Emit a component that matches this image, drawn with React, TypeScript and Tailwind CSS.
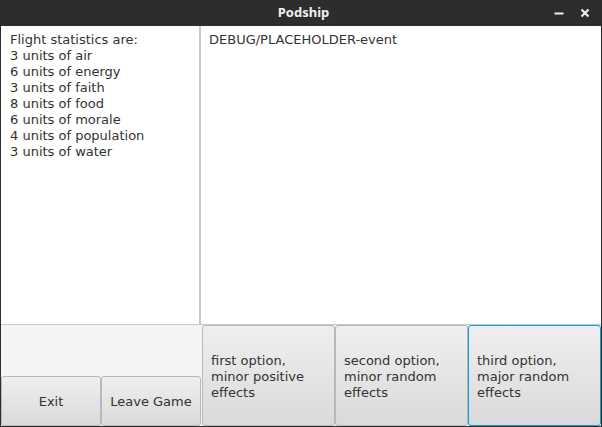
import React from "react"

const stats = [
  "3 units of air",
  "6 units of energy",
  "3 units of faith",
  "8 units of food",
  "6 units of morale",
  "4 units of population",
  "3 units of water",
]

const options = [
  ["first option,", "minor positive", "effects"],
  ["second option,", "minor random", "effects"],
  ["third option,", "major random", "effects"],
]

const btn =
  "rounded-[3px] border bg-gradient-to-b from-[#efefef] to-[#dadada] pt-[2px] text-[13px] leading-[16px] text-[#333]"

export default function App() {
  return (
    <div
      className="flex h-[427px] w-[602px] flex-col bg-[#2d2d2d]"
      style={{ fontFamily: '"DejaVu Sans", sans-serif' }}
    >
      {/* title bar */}
      <div className="relative flex h-[26px] shrink-0 items-center justify-center pl-[5px]">
        <span className="font-['Noto_Sans',sans-serif] text-[13px] font-bold text-[#f0f0f0]">Podship</span>
        <div className="absolute right-[12px] top-0 flex h-full items-center gap-[16px]">
          <svg width="10" height="10" viewBox="0 0 10 10">
            <rect x="0.5" y="4.5" width="9" height="2" fill="#f0f0f0" />
          </svg>
          <svg width="10" height="10" viewBox="0 0 10 10">
            <path d="M1.5 1.5 L8.5 8.5 M8.5 1.5 L1.5 8.5" stroke="#f0f0f0" strokeWidth="2.2" />
          </svg>
        </div>
      </div>

      {/* body */}
      <div className="mx-px mb-px flex flex-1 flex-col bg-[#f4f4f4] text-[13px] leading-[16px] text-[#333]">
        <div className="flex h-[299px] border-b border-[#c8c8c8]">
          <div className="w-[200px] border-r-2 border-[#c8c8c8] bg-white px-[9px] pt-[6px]">
            <div>Flight statistics are:</div>
            {stats.map((s) => (
              <div key={s}>{s}</div>
            ))}
          </div>
          <div className="flex-1 bg-white px-[8px] pt-[6px]">DEBUG/PLACEHOLDER-event</div>
        </div>

        <div className="flex flex-1">
          <div className="flex w-[200px] items-end">
            <button type="button" className={`${btn} h-[50px] w-[100px] border-[#b8b8b8]`}>
              Exit
            </button>
            <button type="button" className={`${btn} h-[50px] w-[100px] border-[#b8b8b8]`}>
              Leave Game
            </button>
          </div>
          <div className="flex flex-1 pl-px">
            {options.map((o, i) => (
              <button
                key={i}
                type="button"
                className={`${btn} flex flex-1 flex-col items-start justify-center pl-[8px] text-left ${
                  i === 2 ? "border-[#0a9fd8]" : "border-[#b8b8b8]"
                }`}
              >
                {o.map((l) => (
                  <span key={l}>{l}</span>
                ))}
              </button>
            ))}
          </div>
        </div>
      </div>
    </div>
  )
}
